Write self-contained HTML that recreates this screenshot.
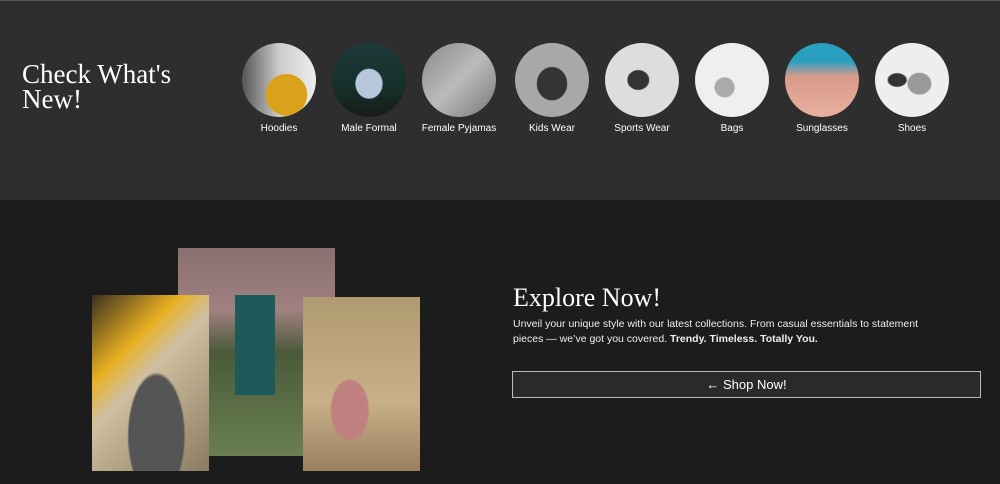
<!DOCTYPE html>
<html><head><style>
body{margin:0;width:1000px;height:484px;overflow:hidden;background:#1c1c1c;font-family:"Liberation Sans",sans-serif;}
.top{position:absolute;left:0;top:0;width:1000px;height:200px;background:#2e2e2e;border-top:1px solid #555;box-sizing:border-box}
h2{position:absolute;left:22px;top:61px;margin:0;font-family:"Liberation Serif",serif;font-weight:normal;color:#fff;font-size:27px;line-height:25px}
.c{position:absolute;top:42px;width:74px;height:74px;border-radius:50%}
.l{position:absolute;top:122px;width:110px;text-align:center;color:#fff;font-size:10px}
.ph{position:absolute}
h3{position:absolute;left:513px;top:283px;margin:0;font-family:"Liberation Serif",serif;font-weight:normal;color:#fff;font-size:26px}
p{position:absolute;left:513px;top:317px;width:470px;margin:0;color:#eee;font-size:10.5px;line-height:15px}
.btn{position:absolute;left:512px;top:371px;width:469px;height:27px;border:1px solid #bbb;box-sizing:border-box;background:#2a2a2a;color:#fff;text-align:center;font-size:13px;line-height:25px}
</style></head><body>
<div class="top">
<h2>Check What's<br>New!</h2>
<div class="c" style="left:242px;background:radial-gradient(circle at 60% 70%,#d9a21a 30%,transparent 31%),linear-gradient(90deg,#555,#ccc 50%,#eee)"></div>
<div class="c" style="left:332px;background:radial-gradient(ellipse at 50% 55%,#b8c8dc 25%,transparent 27%),linear-gradient(#1e3a3a,#14302a 60%,#1a1a1a)"></div>
<div class="c" style="left:422px;background:linear-gradient(135deg,#888,#bbb 50%,#777)"></div>
<div class="c" style="left:515px;background:radial-gradient(ellipse at 50% 55%,#333 28%,transparent 30%),#a8a8a8"></div>
<div class="c" style="left:605px;background:radial-gradient(ellipse at 45% 50%,#333 18%,transparent 20%),#ddd"></div>
<div class="c" style="left:695px;background:radial-gradient(ellipse at 40% 60%,#aaa 15%,transparent 17%),#efefef"></div>
<div class="c" style="left:785px;background:linear-gradient(#2aa0c0 0,#2aa0c0 25%,#d89a8a 45%,#e8b0a0)"></div>
<div class="c" style="left:875px;background:radial-gradient(ellipse at 60% 55%,#999 18%,transparent 20%),radial-gradient(ellipse at 30% 50%,#333 12%,transparent 14%),#eee"></div>
<div class="l" style="left:224px">Hoodies</div>
<div class="l" style="left:314px">Male Formal</div>
<div class="l" style="left:404px">Female Pyjamas</div>
<div class="l" style="left:497px">Kids Wear</div>
<div class="l" style="left:587px">Sports Wear</div>
<div class="l" style="left:677px">Bags</div>
<div class="l" style="left:767px">Sunglasses</div>
<div class="l" style="left:857px">Shoes</div>
</div>
<div class="ph" style="left:178px;top:248px;width:157px;height:208px;background:linear-gradient(#8a7070,#a08080 30%,#4a5a3a 50%,#6a8050)"></div>
<div class="ph" style="left:235px;top:295px;width:40px;height:100px;background:#1f5a5a"></div>
<div class="ph" style="left:92px;top:295px;width:117px;height:176px;background:radial-gradient(ellipse at 55% 80%,#555 30%,transparent 32%),linear-gradient(135deg,#3a3020 0,#e8b020 30%,#d0c0a0 45%,#8a7a60 100%)"></div>
<div class="ph" style="left:303px;top:297px;width:117px;height:174px;background:radial-gradient(ellipse at 40% 65%,#c08080 18%,transparent 20%),linear-gradient(#b09a70,#c8b088 60%,#9a8060)"></div>
<h3>Explore Now!</h3>
<p>Unveil your unique style with our latest collections. From casual essentials to statement<br>pieces — we’ve got you covered. <b>Trendy. Timeless. Totally You.</b></p>
<div class="btn">← Shop Now!</div>
</body></html>
